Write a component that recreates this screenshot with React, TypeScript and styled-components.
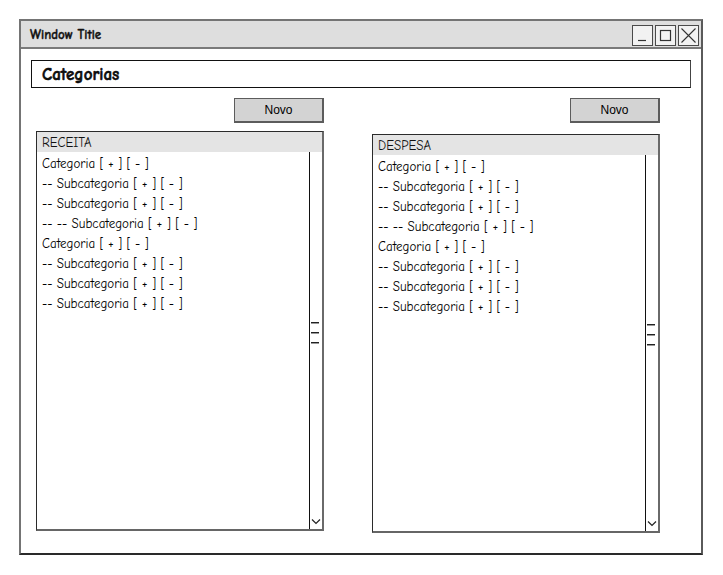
import React from 'react';
import styled, {createGlobalStyle} from 'styled-components';

const sketchFont = '"Comic Sans MS", "Comic Neue", "DejaVu Sans", sans-serif';

const GlobalStyle = createGlobalStyle`
    html, body {
        margin: 0;
        padding: 0;
        background: #ffffff;
    }
    body {
        font-family: ${sketchFont};
        color: #111;
    }
`;

type ListT = {title:string; offset:number; height:number};

const rows = [
    'Categoria [ + ] [ - ]',
    '-- Subcategoria [ + ] [ - ]',
    '-- Subcategoria [ + ] [ - ]',
    '-- -- Subcategoria [ + ] [ - ]',
    'Categoria [ + ] [ - ]',
    '-- Subcategoria [ + ] [ - ]',
    '-- Subcategoria [ + ] [ - ]',
    '-- Subcategoria [ + ] [ - ]',
];

const lists:ListT[] = [
    {title: 'RECEITA', offset: 8, height: 400},
    {title: 'DESPESA', offset: 11, height: 399},
];

const Page = styled.div`
    padding: 19px 0 0 19px;
`;

const Window = styled.div`
    width: 684px;
    height: 536px;
    box-sizing: border-box;
    border: 2px solid #747474;
    border-bottom-color: #2a2a2a;
    border-right-color: #5a5a5a;
    display: flex;
    flex-direction: column;
`;

const TitleBar = styled.div`
    height: 26px;
    background: #dedede;
    border-bottom: 2px solid #7a7a7a;
    display: flex;
    align-items: center;
    justify-content: space-between;
    padding: 0 2px 0 9px;
`;

const Title = styled.span`
    font-weight: bold;
    font-size: 13px;
    -webkit-text-stroke: 0.35px #111;
`;

const WinButtons = styled.div`
    display: flex;
    gap: 2px;
    padding-top: 2px;
`;

const WinButton = styled.div`
    width: 21px;
    height: 21px;
    box-sizing: border-box;
    border: 1px solid #4a4a4a;
    background: #f2f2f2;
    display: flex;
    align-items: center;
    justify-content: center;
`;

const Content = styled.div`
    padding: 11px 10px 0 10px;
`;

const HeaderBox = styled.div`
    height: 28px;
    box-sizing: border-box;
    border: 1px solid #111;
    border-right-color: #444;
    display: flex;
    align-items: center;
    padding-left: 10px;
    font-weight: bold;
    font-size: 17px;
    -webkit-text-stroke: 0.5px #000;
`;

const Columns = styled.div`
    display: flex;
    gap: 48px;
    padding-left: 5px;
    margin-top: 10px;
`;

const Column = styled.div`
    width: 288px;
    display: flex;
    flex-direction: column;
    align-items: flex-end;
`;

const NewButton = styled.div`
    width: 90px;
    height: 25px;
    box-sizing: border-box;
    background: #d3d3d3;
    border: 1px solid #5c5c5c;
    border-right-width: 2px;
    border-bottom-width: 2px;
    display: flex;
    align-items: center;
    justify-content: center;
    font-family: "Liberation Sans", Arial, sans-serif;
    font-size: 12px;
    color: #000;
`;

const List = styled.div<{$offset:number; $height:number}>`
    margin-top: ${(p) => p.$offset}px;
    height: ${(p) => p.$height}px;
    width: 100%;
    box-sizing: border-box;
    border: 1px solid #2b2b2b;
    border-right: 2px solid #6a6a6a;
    border-bottom: 2px solid #666;
    display: flex;
    flex-direction: column;
`;

const ListHead = styled.div`
    height: 20px;
    background: #e4e4e4;
    display: flex;
    align-items: center;
    padding-left: 5px;
    font-size: 13px;
`;

const ListBody = styled.div`
    flex: 1;
    display: flex;
`;

const Items = styled.div`
    flex: 1;
    padding: 2px 0 0 5px;
`;

const Item = styled.div`
    height: 20px;
    line-height: 20px;
    font-size: 13px;
    white-space: nowrap;
    color: #000;
`;

const Scroll = styled.div`
    width: 12px;
    border-left: 1px solid #111;
    display: flex;
    flex-direction: column;
`;

const Spacer = styled.div`
    flex: 1;
`;

const Grip = styled.div`
    height: 0;
    margin: 4px 3px 4px 1px;
    border-top: 1px solid #222;
    border-bottom: 1px solid #999;
`;

const Chevron = styled.div`
    height: 16px;
    display: flex;
    align-items: center;
    justify-content: center;
`;

const Minimize = () => (
    <svg width="15" height="15" viewBox="0 0 15 15">
        <path d="M3 12.5 H11" stroke="#333" strokeWidth="1.2"/>
    </svg>
);

const Maximize = () => (
    <svg width="15" height="15" viewBox="0 0 15 15">
        <rect x="2.5" y="2.5" width="10" height="10" fill="none" stroke="#333" strokeWidth="1.2"/>
    </svg>
);

const Close = () => (
    <svg width="17" height="17" viewBox="0 0 17 17">
        <path d="M1.5 1.5 L15.5 15.5 M15.5 1.5 L1.5 15.5" stroke="#333" strokeWidth="1.1"/>
    </svg>
);

const Down = () => (
    <svg width="10" height="7" viewBox="0 0 10 7">
        <path d="M1 1.5 L5 5.5 L9 1.5" fill="none" stroke="#222" strokeWidth="1.2"/>
    </svg>
);

const CategoryList = (p:ListT) => (
    <List $offset={p.offset} $height={p.height}>
        <ListHead>{p.title}</ListHead>
        <ListBody>
            <Items>
                {rows.map((row, idx) => <Item key={idx}>{row}</Item>)}
            </Items>
            <Scroll>
                <Spacer/>
                <Grip/>
                <Grip/>
                <Grip/>
                <Spacer/>
                <Chevron><Down/></Chevron>
            </Scroll>
        </ListBody>
    </List>
);

export default function App() {
    return (
        <Page>
            <GlobalStyle/>
            <Window>
                <TitleBar>
                    <Title>Window Title</Title>
                    <WinButtons>
                        <WinButton><Minimize/></WinButton>
                        <WinButton><Maximize/></WinButton>
                        <WinButton><Close/></WinButton>
                    </WinButtons>
                </TitleBar>
                <Content>
                    <HeaderBox>Categorias</HeaderBox>
                    <Columns>
                        {lists.map((list) => (
                            <Column key={list.title}>
                                <NewButton>Novo</NewButton>
                                <CategoryList {...list}/>
                            </Column>
                        ))}
                    </Columns>
                </Content>
            </Window>
        </Page>
    );
}
